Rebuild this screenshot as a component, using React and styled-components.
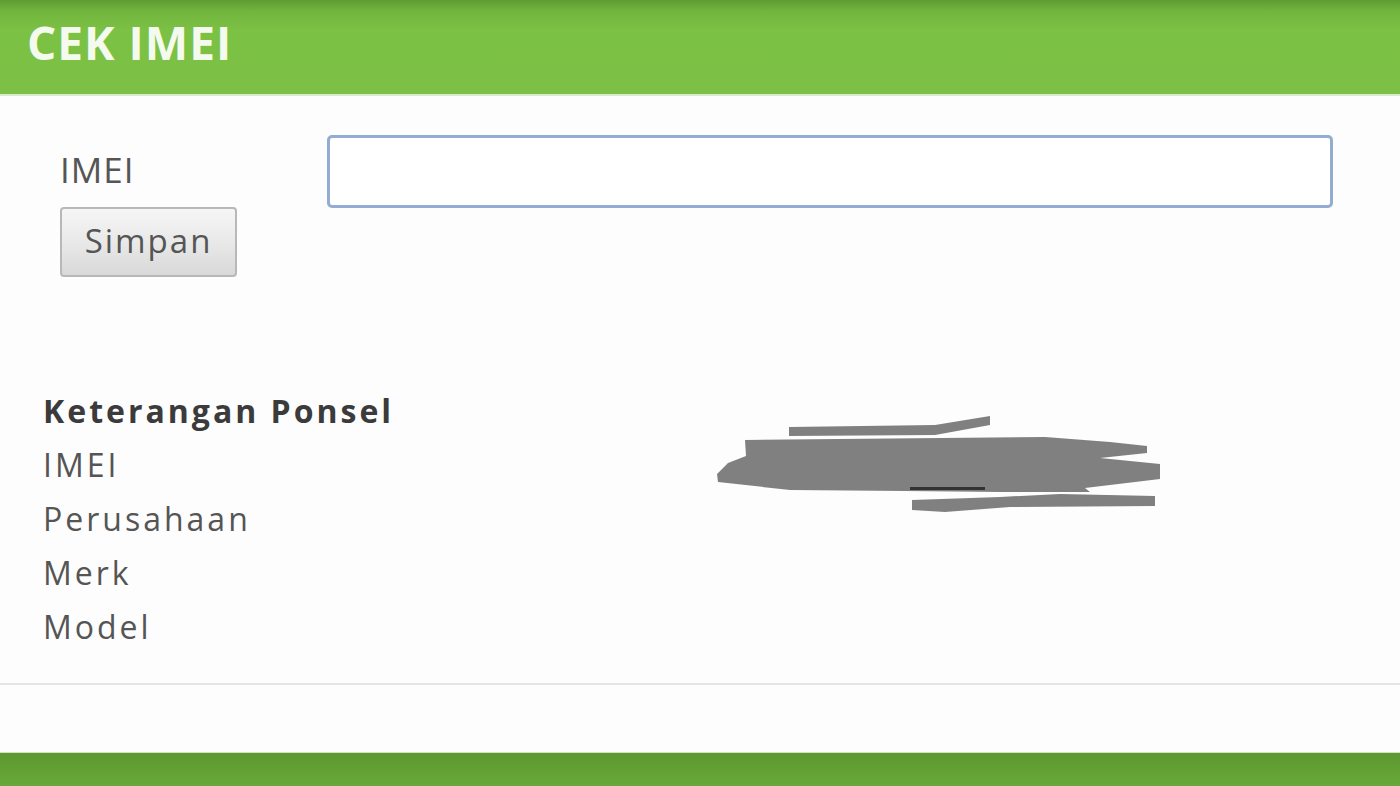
import React from "react";
import styled, { createGlobalStyle } from "styled-components";

const Global = createGlobalStyle`
  html, body { margin: 0; padding: 0; background: #fdfdfd; }
  body { font-family: "Open Sans", "Noto Sans", sans-serif; }
  * { box-sizing: border-box; }
`;

const Page = styled.div`
  width: 1400px;
  height: 786px;
  overflow: hidden;
  display: flex;
  flex-direction: column;
  background: #fdfdfd;
`;

const Header = styled.header`
  height: 96px;
  flex: none;
  background: linear-gradient(#5f9c34 0px, #72b63e 12px, #7bc144 30px, #7cc145 100%);
  border-bottom: 2px solid #d9ebcc;
  display: flex;
  align-items: flex-start;
  padding: 10px 0 0 27px;
`;

const Title = styled.h1`
  margin: 0;
  font-family: "Open Sans", sans-serif;
  font-weight: 700;
  font-size: 46px;
  line-height: 64px;
  letter-spacing: 1px;
  color: #f4faee;
`;

const Form = styled.form`
  padding: 39px 67px 0 60px;
  display: flex;
  flex-direction: column;
`;

const Row = styled.div`
  display: flex;
  align-items: center;
  height: 73px;
`;

const Label = styled.label`
  width: 267px;
  flex: none;
  font-size: 35px;
  letter-spacing: 1px;
  color: #555;
  line-height: 73px;
  padding-bottom: 4px;
`;

const Input = styled.input`
  flex: 1;
  height: 73px;
  border: 3px solid #93acd2;
  border-radius: 5px;
  background: #fff;
  font-family: "Open Sans", sans-serif;
  font-size: 32px;
  color: #666;
  padding: 0 6px;
  outline: none;
`;

const Button = styled.button`
  align-self: flex-start;
  margin-top: -1px;
  width: 177px;
  height: 70px;
  border: 2px solid #b8b8b8;
  border-radius: 4px;
  background: linear-gradient(#f6f6f6, #e6e6e6 60%, #d8d8d8);
  font-family: "Open Sans", sans-serif;
  font-size: 33px;
  letter-spacing: 2px;
  color: #555;
  padding: 0 0 4px;
`;

const Info = styled.section`
  position: relative;
  margin-top: 107px;
  padding-left: 43px;
  display: flex;
  flex-direction: column;
`;

const InfoLine = styled.div`
  font-size: 32px;
  line-height: 54px;
  height: 54px;
  letter-spacing: 3px;
  font-weight: ${(p) => (p.$bold ? 700 : 400)};
  color: ${(p) => (p.$bold ? "#3b3b3b" : "#555")};
`;

const Scribble = styled.svg`
  position: absolute;
  left: 715px;
  top: 30px;
`;

const Divider = styled.hr`
  margin: 29px 0 0;
  border: none;
  height: 2px;
  background: #e2e6e8;
`;

const Spacer = styled.div`
  flex: 1;
`;

const Footer = styled.footer`
  height: 34px;
  flex: none;
  border-top: 1px solid #cfe3bf;
  background: linear-gradient(#5c982f, #68a83a);
`;

export default function App() {
  return (
    <Page>
      <Global />
      <Header>
        <Title>CEK IMEI</Title>
      </Header>
      <Form onSubmit={(e) => e.preventDefault()}>
        <Row>
          <Label>IMEI</Label>
          <Input defaultValue="" />
        </Row>
        <Button type="submit">Simpan</Button>
      </Form>
      <Info>
        <InfoLine $bold>Keterangan Ponsel</InfoLine>
        <InfoLine>IMEI</InfoLine>
        <InfoLine>Perusahaan</InfoLine>
        <InfoLine>Merk</InfoLine>
        <InfoLine>Model</InfoLine>
        <Scribble width="450" height="100" viewBox="715 414 450 100">
          <g fill="#808080">
            <polygon points="789,427 935,425 990,416 990,425 935,435 789,436" />
            <polygon points="745,440 1045,437 1110,442 1147,446 1147,453 1100,458 1160,464 1160,479 1085,488 1090,492 1000,492 905,491 790,490 718,482 717,474 728,463 746,456" />
            <polygon points="912,500 1000,497 1060,494 1155,496 1155,506 1010,507 945,512 912,510" />
          </g>
          <rect x="910" y="487" width="75" height="3" fill="#333" />
        </Scribble>
      </Info>
      <Divider />
      <Spacer />
      <Footer />
    </Page>
  );
}
